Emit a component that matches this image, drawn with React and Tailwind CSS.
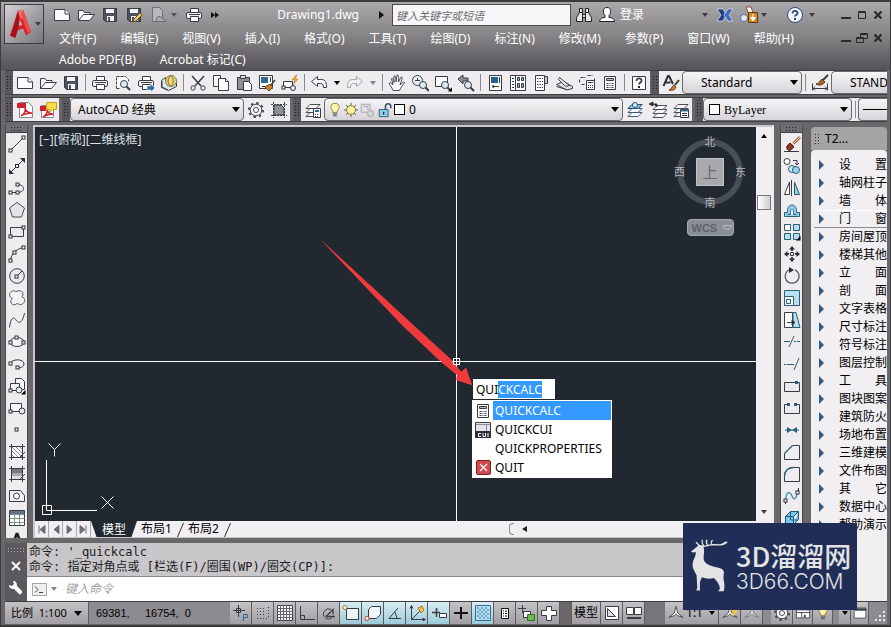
import React, { useEffect, useRef, useState } from "react";

const Node = ({ x, y }) => (
  <rect x={x - 1.5} y={y - 1.5} width="3" height="3" fill="#fff" stroke="#2c2c30" />
);

const Lens = ({ x = 11, y = 11 }) => (
  <g>
    <path d={`M${x + 2} ${y + 2}l4 4`} strokeWidth="2" />
    <circle cx={x} cy={y} r="3.5" fill="#dcecf4" />
  </g>
);

const floppy = (
  <g>
    <path d="M2.5 2.5h13v13h-11l-2-2z" fill="#4c515c" />
    <path d="M5 3h8v4H5z" fill="#f4f4f8" stroke="none" />
    <path d="M6 10h7v5H6z" fill="#f4f4f8" stroke="none" />
    <path d="M7 11h2v4H7z" fill="#4c515c" stroke="none" />
  </g>
);

const printer = (
  <g>
    <path d="M5.5 6.5v-4h8v4" fill="#fff" />
    <rect x="1.5" y="6.5" width="15" height="6" rx="1.5" fill="#f4f4f6" />
    <path d="M5.5 10.5h8v5h-8z" fill="#fff" />
    <path d="M4 8.5h11" />
  </g>
);

const layers = (
  <g fill="#f8f8fa" strokeWidth=".9">
    <path d="M2 15.5l4-4h10l-4 4z" />
    <path d="M2 11.5l4-4h10l-4 4z" />
    <path d="M2 7.5l4-4h10l-4 4z" />
  </g>
);

const icons = {
  newFile: (
    <g fill="#fbfbfd">
      <path d="M1.5 3.5H12l4.5 4.5v6.5h-15z" />
      <path d="M12 3.5V8h4.5" />
    </g>
  ),
  open: (
    <g fill="#fbfbfd">
      <path d="M1.5 14.5v-10H6l1.5 2H13v3" />
      <path d="M1.5 14.5l5-6h11l-5 6z" />
    </g>
  ),
  save: floppy,
  saveAs: (
    <g>
      {floppy}
      <path d="M8 16l1-3 6-6 2 2-6 6z" fill="#f2c76b" stroke="#6b4d1f" />
    </g>
  ),
  webOpen: (
    <g stroke="#6f6d74">
      <path d="M3.5 1.5h7l3 3v11h-10z" fill="#b9b7bb" />
      <path d="M8 15.5a3 3 0 0 1 3-5l6 5z" fill="#aaa8ad" />
    </g>
  ),
  print: printer,
  preview: (
    <g>
      <path d="M2.5 14.5v-12h9l3 3v2M2.5 14.5h3" fill="#fff" strokeDasharray="3 1" />
      <Lens x={10} y={10} />
    </g>
  ),
  publish: (
    <g>
      {printer}
      <path d="M10 12h4v-2l4 4-4 4v-2h-4z" fill="#2a6fa8" stroke="#fff" strokeWidth=".5" />
    </g>
  ),
  globe: (
    <g>
      <path d="M1.5 6.5l4-3 2 8 9-3v4l-8 4-7-3z" fill="#d6ebf3" />
      <circle cx="11" cy="7" r="5.5" fill="#e9d77a" stroke="#8a7a34" />
      <path d="M11 1.5c-4 3-4 8 0 11" stroke="#a9444e" />
      <path d="M11 1.5c3 3 3 8 0 11" stroke="#5d8a4a" />
      <path d="M2 7v6l6 3" />
    </g>
  ),
  cut: (
    <g>
      <path d="M3 2l9 10M15 2L6 12" strokeWidth="1.5" />
      <circle cx="4" cy="14" r="2.2" fill="#f2f2f4" />
      <circle cx="14" cy="14" r="2.2" fill="#f2f2f4" />
    </g>
  ),
  copy: (
    <g fill="#fff">
      <path d="M1.5 1.5h7v11h-7z" />
      <path d="M6.5 4.5h7l3 3v9h-10z" />
      <path d="M13.5 4.5v3h3" />
    </g>
  ),
  paste: (
    <g>
      <path d="M2.5 3.5h12v12h-12z" fill="#8e9097" />
      <path d="M5.5 1.5h5v3h-5z" fill="#dcdce0" />
      <path d="M8.5 7.5h5l3 3v6h-8z" fill="#fff" />
    </g>
  ),
  matchProps: (
    <g>
      <path d="M1.5 1.5h13v13h-13z" fill="#fff" />
      <path d="M3 3h7v6H3z" fill="#2d6b96" stroke="none" />
      <path d="M12.5 3v5M4 12.5h4" />
      <path d="M17 6l-4 5" stroke="#444" strokeWidth="1.5" />
      <path d="M7 13l5-3 3 3-4 4z" fill="#c87f2e" stroke="#6b4216" />
    </g>
  ),
  blockEdit: (
    <g>
      <path d="M2.5 7.5h9v6h-9z" fill="#f7f7f9" />
      <Node x={2.5} y={13.5} />
      <circle cx="12" cy="14" r="2.5" fill="#dcecf4" />
      <path d="M15 1l-4 5h3l-2 5 5-6h-3l2-4z" fill="#f4a52e" stroke="#b8721a" strokeWidth=".5" />
    </g>
  ),
  undo: <path d="M1.5 7.5l6-5v3h4c4 0 5 3 5 8h-3c0-3-1-4-3-4h-3v3z" fill="#fafafc" />,
  redo: (
    <path d="M16.5 7.5l-6-5v3h-4c-4 0-5 3-5 8h3c0-3 1-4 3-4h3v3z" fill="#f1f1f4" stroke="#a6a5aa" />
  ),
  pan: (
    <path
      d="M5 16.5C4 13 1 11 1.500 9c1-1 2 .5 3.500 2L3.500 4.500c1-1 1.800 0 2.500 4L6 2c1-1 2 0 2 6l1-7c1-.5 2 0 1.500 7L13 3c1-.5 1.500.5 1 2l-2 6c2-2 4-3.500 4.500-2.500-1 2-4 5-5 8z"
      fill="#fafafc"
      strokeWidth=".9"
    />
  ),
  zoom: (
    <g>
      <circle cx="6.5" cy="6.5" r="5" fill="#e6f1f6" />
      <path d="M4 6.5h5M6.5 4v3" />
      <Lens x={12} y={11} />
    </g>
  ),
  zoomWindow: (
    <g>
      <path d="M1.5 2.5h12v10h-12z" fill="#fafafc" />
      <Lens x={11} y={11} />
      <path d="M14 17.5h4v-4z" fill="#000" stroke="none" />
    </g>
  ),
  zoomPrev: (
    <g>
      <path d="M1 5l5-4v3h5v3H6v3z" fill="#8a8c93" />
      <Lens x={11} y={11} />
    </g>
  ),
  properties: (
    <g>
      <path d="M3.5 1.5h12v15h-12z" fill="#fff" />
      <path d="M5 3h7v6H5z" fill="#2d5f8c" stroke="none" />
      <path d="M13.5 3v6M7 12.5h6M8 11l-2 1.5L8 14" />
    </g>
  ),
  designCenter: (
    <g>
      <path d="M1.5 1.5h15v15h-15z" fill="#fff" />
      <path d="M6.5 1.5v15M3 4.5h2M3 7.5h2M3 10.5h2M3 13.5h2" />
      <path d="M8.5 3.5h2v3h-2zM12.5 3.5h2v3h-2zM8.5 9.5h2v4h-2zM12.5 9.5h2v4h-2z" fill="#8fa9bd" />
    </g>
  ),
  palettes: (
    <g>
      <path d="M3.5 1.5h9v15h-9z" fill="#fff" />
      <path d="M12.5 2.5h3v7h-3z" fill="#c9cad0" />
      <path d="M5 4.5h6M5 7.5h6M5 10.5h6M5 13.5h6" strokeDasharray="1.5 1" />
    </g>
  ),
  sheetSet: (
    <g fill="#e6e6ea">
      <path d="M1.5 10.5l7-3 9 5v2l-6 1.5z" />
      <path d="M4.500 3.500l10 8-4 1-7-7zM1.500 12.500l10 3" />
    </g>
  ),
  markup: (
    <g>
      <path d="M2.5 3.5h5m2-2h5m2 3v3M1.5 5.5v3m2 2h4" strokeDasharray="3 1" />
      <path d="M8.5 6.5h8v9h-8z" fill="#fff" />
      <path d="M10 8.5h5M10 11.5h1m1 0h1m1 0h1M10 13.5h1m1 0h1m1 0h1" />
    </g>
  ),
  calc: (
    <g>
      <path d="M3.5 2.5h11v13h-11z" fill="#fff" />
      <path d="M5.5 4.5h7v2h-7z" fill="#b9bbc2" />
      <path d="M5.5 9.5h2m1 0h1m1 0h2M5.5 11.5h2m1 0h1m1 0h2M5.5 13.5h2m1 0h1m1 0h2" />
    </g>
  ),
  help: (
    <g>
      <path d="M2.5 2.5h13v13h-13z" fill="#fff" />
      <path d="M6.5 7c0-4 5.500-3 5 0-.3 1.500-2.500 1.500-2.500 3.500" strokeWidth="1.8" />
      <path d="M8 12h2v2H8z" fill="#222" stroke="none" />
    </g>
  ),
  textStyle: (
    <g>
      <path d="M1.500 12L6 2h1l4 8M3.500 8.500h5" strokeWidth="2" stroke="#33343a" />
      <path d="M17 6l-4 5" strokeWidth="2" stroke="#44342a" />
      <path d="M7 16c2 0 3-4 5-5l2 2c-1 3-4 4-7 3z" fill="#c87f2e" stroke="#6b4216" />
    </g>
  ),
  dimStyle: (
    <g>
      <path d="M1.5 9.5v7M16.5 9.5v7M2 14.5h14M4 12.5l-2 2 2 2M14 12.5l2 2-2 2" />
      <path d="M17 1l-5 5" strokeWidth="2" />
      <path d="M5 10c3 0 4-4 6-5l3 3c-2 3-6 4-9 2z" fill="#a8692e" stroke="#5b3a18" />
    </g>
  ),
  pdf: (
    <g>
      <path d="M3.5 1.5h9l4 4v11h-13z" fill="#fff" stroke="#88858c" />
      <path d="M1 2h9v5H1z" fill="#d3212c" stroke="none" />
      <path d="M5 15c3-2 5-5 4-8 1 4 4 5 7 5-4 0-8 1-11 3z" stroke="#d3212c" strokeWidth="1.5" />
    </g>
  ),
  pdfComment: (
    <g>
      <path d="M2.5 4.5h12v12h-12z" fill="#fff" stroke="#88858c" />
      <path d="M1 5h6v5H1z" fill="#d3212c" stroke="none" />
      <path d="M4 16c3-2 5-4 4-7 1 3 4 4 6 4-4 0-7 1-10 3z" stroke="#d3212c" strokeWidth="1.5" />
      <path d="M7.5 1.500h10v7h-4l-3 3v-3h-3z" fill="#f8dc4a" stroke="#c5a31f" />
    </g>
  ),
  gear: (
    <g stroke="#4c4e55">
      <circle cx="9" cy="9" r="7" strokeWidth="2" strokeDasharray="2.500 3" />
      <circle cx="9" cy="9" r="5.800" fill="#f2f2f4" />
      <circle cx="9" cy="9" r="2.500" fill="#fff" />
    </g>
  ),
  workspace: (
    <g>
      <path d="M4 4h7l3 3v7H4z" fill="#8d9097" />
      <path d="M1 3.5h16M1 14.5h16M3.5 1v16M14.5 1v16" strokeDasharray="2 1" />
    </g>
  ),
  layerProps: (
    <g>
      {layers}
      <path d="M9.5 7.5h7v9h-7z" fill="#fff" />
      <path d="M11 9h4v2h-4z" fill="#2d6b96" stroke="none" />
      <path d="M11 13.5h1m1 0h1M11 15.5h1m1 0h1" />
    </g>
  ),
  bulb: (
    <g>
      <path d="M9 1.5c-6 0-5.500 6-2.500 8.500v2h5v-2c3-2.500 3.500-8.500-2.500-8.500z" fill="#fdf3a8" stroke="#8b7b3c" />
      <path d="M6.5 13.5h5M7 15.5h4" />
    </g>
  ),
  sun: (
    <g>
      <path d="M9 1v16M1 9h16M3.5 3.5l11 11M14.5 3.5l-11 11" stroke="#57512f" />
      <circle cx="9" cy="9" r="5" fill="#fdf0a0" stroke="#7d7131" />
    </g>
  ),
  freeze: (
    <g stroke="#a5a4a9">
      <path d="M2.5 2.5h10v9h-10z" fill="#e0dfe2" />
      <path d="M5 5h5v4" />
      <circle cx="13" cy="13" r="3.5" fill="#d4d3d7" />
    </g>
  ),
  unlock: (
    <g>
      <path d="M9.5 8.5V5c0-4 6-4 6 0v2" strokeWidth="1.8" stroke="#33556e" />
      <path d="M2.5 8.5h10v8h-10z" fill="#8fd0ec" stroke="#25566f" />
      <path d="M7.5 11v3" stroke="#123" strokeWidth="1.5" />
    </g>
  ),
  layerCurrent: (
    <g stroke="#27506e">
      {layers}
      <path d="M6 3.5h10l-4 4H2z" fill="#8fd0ec" />
      <circle cx="9" cy="4" r="2.5" fill="#d9eef7" />
    </g>
  ),
  layerPrev: (
    <g>
      <g transform="translate(2 1)">{layers}</g>
      <path d="M0 3l4-2v4zM4 3h4v3" fill="#222" />
    </g>
  ),
  layerState: (
    <g>
      {layers}
      <path d="M8.5 8.5h8v8h-8z" fill="#fff" />
      <path d="M9 9.5h7" stroke="#2d6b96" strokeWidth="2" />
      <path d="M10 12.5h5M10 14.5h5" />
    </g>
  ),
  line: (
    <g>
      <path d="M2.5 15.5l13-13" />
      <Node x={2.5} y={15.5} />
      <Node x={15.5} y={2.5} />
    </g>
  ),
  xline: (
    <g>
      <path d="M2 16L16 2" />
      <path d="M1 17v-5l5 5zM17 1v5l-5-5z" fill="#2c2c30" stroke="none" />
      <Node x={9} y={9} />
    </g>
  ),
  pline: (
    <g>
      <path d="M2.5 13.5h7c8 0 8-8 0-8" />
      <Node x={2.5} y={13.5} />
      <Node x={9.5} y={13.5} />
      <Node x={9.5} y={5.5} />
    </g>
  ),
  polygon: <path d="M9 1.500l7.500 5.500-3 9h-9l-3-9z" fill="#e3e3e8" stroke="#4a4a50" />,
  rect: (
    <g>
      <path d="M2.5 4.5h13v9h-13z" fill="#e9e9ee" />
      <Node x={2.5} y={13.5} />
      <Node x={15.5} y={4.5} />
    </g>
  ),
  arc: (
    <g>
      <path d="M2.500 15.500C3 9 8 4 15.500 2.500" />
      <Node x={2.5} y={15.5} />
      <Node x={6.5} y={7.5} />
      <Node x={15.5} y={2.5} />
    </g>
  ),
  circle: (
    <g>
      <circle cx="9" cy="9" r="7.3" fill="#e9e9ee" />
      <path d="M9 9l5-5" />
      <Node x={8.5} y={9.5} />
    </g>
  ),
  cloud: (
    <path
      d="M8 3c2-2.500 7.500-1 7 2 0 2-1 2-1 3 3 1 3.500 4 1.500 6-2 2.500-4.500 2-6 0-2 2.500-5 2-6 .5-1.500-2-.5-4 1-5C1 8 1 5 2.500 3.500 4.500 1 7 1.500 8 3z"
      fill="#f3f3f6"
      stroke="#55555b"
    />
  ),
  spline: <path d="M1.500 16.500C3 5 6 6 8 9s6 5 8.500-7" stroke="#3f3f45" />,
  ellipse: (
    <g>
      <ellipse cx="9" cy="9" rx="7" ry="4.5" fill="#f3f3f6" />
      <Node x={8.5} y={4.5} />
      <Node x={2.5} y={9.5} />
      <Node x={15.5} y={9.5} />
    </g>
  ),
  ellipseArc: (
    <g>
      <path d="M2.500 8.500C3 4 16 3 16 9c0 3-4 4-6 4" />
      <Node x={2.5} y={8.5} />
      <Node x={9.5} y={12.5} />
    </g>
  ),
  insertBlock: (
    <g fill="#f7f7f9">
      <path d="M7.5 1.5h6l3 3v8h-9z" />
      <path d="M2.5 6.5h9v7h-9z" />
      <circle cx="11" cy="13" r="3" fill="#dfe9ee" />
      <Node x={2.5} y={13.5} />
      <path d="M13 17.5h4.500V13z" fill="#000" stroke="none" />
    </g>
  ),
  makeBlock: (
    <g fill="#f7f7f9">
      <path d="M2.5 4.5h11v8h-11z" />
      <circle cx="14" cy="12" r="3" fill="#dfe9ee" />
      <Node x={2.5} y={12.5} />
    </g>
  ),
  point: <Node x={8.5} y={8.5} />,
  hatch: (
    <g>
      <path d="M4 4h10v10H4z" fill="#fff" stroke="none" />
      <path d="M4 8l6 6M4 4l10 10M8 4l6 6M4 12l2 2M12 4l2 2" stroke="#8c8c92" />
      <path d="M1 3.5h16M1 14.5h16M3.5 1v16M14.5 1v16" />
      <path d="M12 14l5-5" />
    </g>
  ),
  gradient: (
    <g>
      <path d="M4 4h10v4H4z" fill="#77777d" stroke="none" />
      <path d="M4 8h10v3H4z" fill="#a9a9b0" stroke="none" />
      <path d="M4 11h10v3H4z" fill="#dcdce0" stroke="none" />
      <path d="M1 3.5h16M1 14.5h16M3.5 1v16M14.5 1v16" />
      <path d="M12 14l5-5" />
    </g>
  ),
  region: (
    <g>
      <path d="M1.5 3.5h11l4 5v6h-15z" fill="#f3f3f6" />
      <circle cx="8.5" cy="9" r="3" fill="#fff" />
    </g>
  ),
  table: (
    <g>
      <path d="M1.5 1.5h15v15h-15z" fill="#fff" />
      <path d="M2 2h14v3H2z" fill="#5f7487" stroke="none" />
      <path d="M1.5 5.5h15M1.5 9.5h15M1.5 13.5h15M6.5 5v11M11.5 5v11" stroke="#7a948a" />
    </g>
  ),
  mtext: <path d="M4 16L8.500 3h1L14 16M6 11.500h6" strokeWidth="2.5" stroke="#222" />,
  erase: (
    <g>
      <path d="M1 16.5h15" />
      <path d="M17 2l-8 8" strokeWidth="3" stroke="#a8703f" />
      <path d="M17 2l-6 6" strokeWidth="1" stroke="#f0c48c" />
      <path d="M4 11l3-3 4 4-4 3.500c-2 .5-4-2-3-4.500z" fill="#8a3626" stroke="#4d1c14" />
      <path d="M8 7l4 4" stroke="#eee" strokeWidth="1.5" />
    </g>
  ),
  copyObj: (
    <g>
      <circle cx="4" cy="4.500" r="3" fill="#fff" />
      <path d="M10 3.500h4v4M12 6l2 2 2-2" />
      <circle cx="9" cy="12" r="3.5" fill="#cde8f3" stroke="#2c5e78" />
      <circle cx="13" cy="13" r="3.5" fill="#9bd6ee" stroke="#2c5e78" />
    </g>
  ),
  mirror: (
    <g>
      <path d="M6.5 3v12.5h-5z" fill="#fff" />
      <path d="M11.5 3v12.5h5z" fill="#8fd0ec" stroke="#2c5e78" />
      <path d="M8.5 1v16" />
    </g>
  ),
  offset: (
    <g stroke="#2c5e78">
      <path d="M1.500 15.500v-4h3c-1-10 10-10 9 0h3v4z" fill="#8fd0ec" />
      <path d="M4.500 13.500h3c-1-7 4-7 3 0h3" fill="#fff" />
    </g>
  ),
  array: (
    <g>
      <path d="M1.5 1.5h6v6h-6z" fill="#fff" stroke="#2c5e78" />
      <path d="M10.5 1.5h6v6h-6zM1.5 10.5h6v6h-6zM10.5 10.5h6v6h-6z" fill="#b5e0f2" stroke="#2c5e78" />
      <path d="M13 17.500h4.500V13z" fill="#000" stroke="none" />
    </g>
  ),
  move: (
    <g>
      <path d="M7.5 7.5h3v3h-3z" />
      <path d="M9 1l3 3.500H6zM9 17l3-3.500H6zM1 9l3.500-3v6zM17 9l-3.500-3v6z" fill="#2c2c30" stroke="none" />
      <path d="M9 4v2M9 12v2M4 9h2M12 9h2" strokeWidth="2" />
    </g>
  ),
  rotate: (
    <g>
      <path d="M7 2.500a7 7 0 1 0 5 .3" strokeWidth="1.3" stroke="#55555b" />
      <path d="M6 0l5 3-5 3z" fill="#2c2c30" stroke="none" />
    </g>
  ),
  scale: (
    <g stroke="#2c5e78">
      <path d="M1.5 1.5h15v15h-15z" fill="#b5e0f2" />
      <path d="M1.5 7.5h9v9h-9z" fill="#fff" />
      <path d="M3.5 10.5h4v4h-4z" fill="#e8f4f9" />
    </g>
  ),
  stretch: (
    <g>
      <path d="M1.5 1.5h8v15h-8z" fill="#fff" />
      <path d="M10 1.500h3l4 15h-7z" fill="#b5e0f2" stroke="#2c5e78" />
      <path d="M4 11.500h7M9 9l3 2.500L9 14z" fill="#111" />
    </g>
  ),
  trim: <path d="M1 8.500h6M11 8.500h2m1 0h3M6 14l5-11" stroke="#2c5e78" />,
  extend: <path d="M1 9.500h2m1 0h7M11 15l5-12" stroke="#2c5e78" />,
  breakAt: (
    <g>
      <path d="M1.5 14.5v-9h15v9z" fill="#eaeaef" />
      <path d="M12 4h3v3h-3z" fill="#2c5e78" stroke="none" />
    </g>
  ),
  breakObj: (
    <g>
      <path d="M5.5 5.5h-4v9h15v-9h-4" fill="#eaeaef" />
      <path d="M4 4h3v3H4zM11 4h3v3h-3z" fill="#2c5e78" stroke="none" />
    </g>
  ),
  join: (
    <g fill="#2c5e78" stroke="none">
      <path d="M2 8.500h14v1H2z" />
      <path d="M4 6l5 3-5 3zM14 6L9 9l5 3z" />
    </g>
  ),
  chamfer: (
    <g>
      <path d="M1.5 16.5v-6l8-8h7v14z" fill="#eeeef2" />
      <path d="M1.500 10.500l8-8" stroke="#2c5e78" strokeWidth="1.3" />
    </g>
  ),
  fillet: (
    <g>
      <path d="M1.500 16.500v-5c0-6 4-9 9-9h6v14z" fill="#eeeef2" />
      <path d="M1.500 11.500c0-6 4-9 9-9" stroke="#2c5e78" strokeWidth="1.3" />
    </g>
  ),
  blend: (
    <g>
      <path d="M2.500 14C3 4 7 4 9 9s4 4 6-6" stroke="#3f8db4" strokeWidth="1.3" />
      <path d="M2.5 12v5M15.500 1v5" />
      <Node x={2.5} y={13.5} />
      <Node x={14.5} y={5.5} />
    </g>
  ),
  explode: (
    <g stroke="#1e5c7c" fill="#7cc8e8">
      <path d="M2.5 7.5h8v8h-8zM2.5 7.5l5-5h8l-5 5M15.5 2.5v8l-5 5" />
      <path d="M7.5 3v8M8 11h7" fill="none" />
    </g>
  ),
  snap: (
    <g>
      <path d="M1 6.5h12M6.5 1v12" />
      <path d="M4.5 4.5h4v4h-4z" />
      <path d="M11.5 17v-6.500h4v3h-4" stroke="#2d6b96" />
    </g>
  ),
  dots: <path d="M3 4.500h9M3 7.500h9M3 10.500h9M3 14.500h10M14.500 3v11" strokeDasharray="1 2" />,
  grid: (
    <g>
      <path d="M1.5 1.5h15v15h-15z" fill="#fff" />
      <path
        d="M4.5 1v16M7.5 1v16M10.5 1v16M13.5 1v16M1 4.5h16M1 7.5h16M1 10.5h16M1 13.5h16"
        stroke="#63656c"
      />
    </g>
  ),
  ortho: <path d="M2.5 2v13.5H17M2.5 11.5h4v4" />,
  polar: (
    <g>
      <path d="M12 13.500a5 5 0 1 1-1-8" />
      <path d="M6 12.500h9M6 12.500l7-7v5" strokeWidth="1.3" />
    </g>
  ),
  osnap: (
    <g>
      <path d="M4.5 4.5h12v11h-12z" fill="#eef3f6" />
      <circle cx="3" cy="3.5" r="2" fill="#fff" stroke="#b5702b" />
    </g>
  ),
  osnap3d: (
    <g>
      <path d="M4.5 5.500l3-3h9v8l-4 4h-8z" fill="#f4f8fa" />
      <circle cx="3" cy="14.5" r="2" fill="#fff" stroke="#c4392b" />
    </g>
  ),
  otrack: <path d="M3 14.500h12M3 14.500L12 4M9 8l2 6" />,
  ducs: (
    <g>
      <path d="M3.500 2v13.500H17M3.500 15.500L12 7M2 4.500l1.500-3 1.500 3M14.500 14l3 1.500-3 1.500" />
      <path d="M10 4l4-2 2 4-3 3z" fill="#f4c04a" stroke="#a87a1f" />
    </g>
  ),
  dyn: (
    <g>
      <path d="M2 8.5h8M6.5 4v9" strokeWidth="1.5" />
      <path d="M9.5 9.5h7v4h-7z" fill="#fff" />
    </g>
  ),
  lwt: <path d="M2 9h14M9 3v12" stroke="#111" strokeWidth="2" />,
  transp: (
    <g>
      <path d="M1.5 1.5h15v15h-15z" fill="#b9dfef" stroke="#2d6b96" />
      <path d="M3 4h12M3 8h12M3 12h12" stroke="#6dabcb" strokeDasharray="2 2" strokeWidth="2" />
      <path d="M5 6h11M5 10h11M5 14h11" stroke="#6dabcb" strokeDasharray="2 2" strokeWidth="2" />
    </g>
  ),
  quickProps: (
    <g stroke="#111">
      <path d="M5.5 4.5h7v10h-7z" fill="#fff" />
      <path d="M7 7h1m1 0h2M7 9.500h1m1 0h2M7 12h1m1 0h2" />
    </g>
  ),
  cycling: (
    <g>
      <path d="M0 4.5h8M4.5 1v8" />
      <path d="M5.5 7.5h7v6h-7z" fill="#fff" />
      <path d="M9.5 10.5h7v6h-7z" fill="#6fb84e" stroke="#2e6e1d" />
    </g>
  ),
  monitor: <path d="M6.5 2.5h5v4h5v5h-5v5h-5v-5h-5v-5h5z" fill="#fff" />,
  layoutQv: (
    <g>
      <path d="M2.5 2.5h13v13h-13z" fill="#fff" />
      <path d="M4.5 4.500v8h8z" fill="#d8dadf" />
    </g>
  ),
  drawingQv: <path d="M1.5 3.5h7v7h-7zM9.5 3.5h7v7h-7zM2 14.5h14M2 13.500h14" fill="#fff" />,
  anno: <path d="M9 1.500l2 7.500 6 5-6-2-2-2-2 2-6 2 6-5z" fill="#fff" />,
  annoOn: (
    <g>
      <path d="M9 1.500l2 7.500 6 5-6-2-2-2-2 2-6 2 6-5z" fill="#fff" />
      <path d="M10 4l4 2 3-3v5l-4 5z" fill="#f4c04a" stroke="none" />
    </g>
  ),
  toolbarLock: (
    <g>
      <path d="M1.5 5.5h15v9h-15zM1.5 8.5h15M7.5 8v6" fill="#fff" />
      <path d="M11 11v3" strokeWidth="2" />
    </g>
  ),
  cleanScreen: (
    <g>
      <path d="M1.5 2.5h15v13h-15z" fill="#fff" />
      <path d="M2 4.5h15" strokeWidth="3" />
    </g>
  ),
  binoculars: (
    <g fill="#e6e6ea" stroke="#222">
      <path d="M4.5 2.5h3v5h-3zM10.5 2.5h3v5h-3z" />
      <path d="M1.5 15.5v-4l3-5h3v9zM10.5 15.5v-9h3l3 5v4z" />
      <path d="M7.5 8.5h3v3h-3z" />
    </g>
  ),
  user: (
    <path
      d="M9 1.500c-5 0-4 6-2 8v2c-3 0-5 1-5.500 4h15c-.5-3-2.500-4-5.500-4v-2c2-2 3-8-2-8z"
      fill="#fff"
      stroke="#222"
    />
  ),
  exchange: (
    <g strokeWidth=".7" stroke="#dfe6f5">
      <path d="M1 3h6l3 6-3 6H1l4-6z" fill="#24407c" />
      <path d="M17 3h-5L8 9l4 6h5l-4-6z" fill="#3b68b8" />
    </g>
  ),
  apps: (
    <g>
      <path d="M6 1h5l5 14h-4z" fill="#fff" stroke="#8d4b3d" />
      <circle cx="4" cy="12" r="3.5" fill="#e2eaf6" stroke="#5a6c9c" />
      <path d="M8.5 6.5h9v10h-9z" fill="#d98a1f" stroke="#5e3a08" />
      <path d="M13 8v4M10.500 11.500h5L13 15z" fill="#fff" stroke="#fff" />
    </g>
  ),
  helpRound: (
    <g>
      <circle cx="9" cy="9" r="7.5" fill="#f3f7fd" stroke="#27467c" />
      <path d="M6.500 7.500c0-4 5.500-3 5 0-.3 1.500-2.500 1.500-2.500 3" stroke="#27467c" strokeWidth="1.8" />
      <path d="M8 12h2v2H8z" fill="#27467c" stroke="none" />
    </g>
  ),
};

const Icon = ({ name, className = "size-[18px]" }) => (
  <svg viewBox="0 0 18 18" className={`${className} shrink-0`} fill="none" stroke="#3a3c43" aria-hidden="true">
    {icons[name]}
  </svg>
);

const Caret = ({ className = "text-black" }) => (
  <svg width="8" height="5" viewBox="0 0 8 5" className={`shrink-0 ${className}`} aria-hidden="true">
    <path d="M0 0h8L4 5z" fill="currentColor" />
  </svg>
);

const SmallCaret = ({ className = "text-[#3d3d42]" }) => (
  <svg width="6" height="4" viewBox="0 0 6 4" className={`shrink-0 ${className}`} aria-hidden="true">
    <path d="M0 0h6L3 4z" fill="currentColor" />
  </svg>
);

const Grip = () => (
  <div className="w-2 shrink-0 py-1 px-px bg-[#59575b]">
    <div className="h-full bg-[radial-gradient(#1c1c1e_1px,transparent_1px)] bg-size-[3px_3px]" />
  </div>
);

const GripTop = () => (
  <div className="h-2 shrink-0 py-px px-1 bg-[#6f6d71] border-b border-[#3e3d40]">
    <div className="h-full bg-[radial-gradient(#1c1c1e_1px,transparent_1px)] bg-size-[3px_3px]" />
  </div>
);

const Separator = () => (
  <div className="w-[6px] shrink-0 flex justify-center">
    <div className="w-px my-[3px] bg-[#8b898d]" />
  </div>
);

const Panel = ({ className = "", children }) => (
  <div className={`flex items-stretch bg-[#eeecef] ${className}`}>{children}</div>
);

const ToolButton = ({ name }) => (
  <button aria-label={name} className="w-[23px] shrink-0 flex items-center justify-center">
    <Icon name={name} />
  </button>
);

const Combo = ({ label, value, className = "", selectClass = "", children }) => (
  <label
    className={`relative flex items-center rounded-sm border border-[#6b696d] bg-linear-to-b from-[#f6f5f7] to-[#d6d4d8] ${className}`}
  >
    {children}
    <select
      aria-label={label}
      className={`appearance-none bg-transparent flex-1 min-w-0 h-full outline-none text-black ${selectClass}`}
    >
      <option>{value}</option>
    </select>
    <Caret className="absolute right-[3px] text-black" />
  </label>
);

const toolbar = [
  "newFile", "open", "save", "|",
  "print", "preview", "publish", "globe", "|",
  "cut", "copy", "paste", "matchProps", "blockEdit", "|",
  "undo", "v", "redo", "w", "|",
  "pan", "zoom", "zoomWindow", "zoomPrev", "|",
  "properties", "designCenter", "palettes", "sheetSet", "markup", "calc", "|",
  "help",
];

const drawTools = [
  "line", "xline", "pline", "polygon", "rect", "arc", "circle", "cloud", "spline", "ellipse",
  "ellipseArc", "insertBlock", "makeBlock", "point", "hatch", "gradient", "region", "table", "mtext",
];

const modifyTools = [
  "erase", "copyObj", "mirror", "offset", "array", "move", "rotate", "scale", "stretch", "trim",
  "extend", "breakAt", "breakObj", "join", "chamfer", "fillet", "blend", "explode",
];

const menus = [
  "文件(F)", "编辑(E)", "视图(V)", "插入(I)", "格式(O)", "工具(T)", "绘图(D)", "标注(N)", "修改(M)",
  "参数(P)", "窗口(W)", "帮助(H)", "Adobe PDF(B)", "Acrobat 标记(C)",
];

const screenMenu = [
  "设　　置", "轴网柱子", "墙　　体", "门　　窗", "房间屋顶", "楼梯其他", "立　　面", "剖　　面",
  "文字表格", "尺寸标注", "符号标注", "图层控制", "工　　具", "图块图案", "建筑防火", "场地布置",
  "三维建模", "文件布图", "其　　它", "数据中心", "帮助演示",
];

const statusToggles = [
  { name: "snap", on: false },
  { name: "dots", on: false },
  { name: "grid", on: false },
  { name: "ortho", on: false },
  { name: "polar", on: false },
  { name: "osnap", on: true },
  { name: "osnap3d", on: true },
  { name: "otrack", on: true },
  { name: "ducs", on: true },
  { name: "dyn", on: true },
  { name: "lwt", on: false },
  { name: "transp", on: true },
  { name: "quickProps", on: false },
  { name: "cycling", on: false },
  { name: "monitor", on: false },
];

const WindowButtons = ({ restore }) => (
  <div className="flex text-[#2a2a2d]">
    <button aria-label="最小化" className="w-4 h-4 flex items-center justify-center">
      <svg width="10" height="12" viewBox="0 0 10 12">
        <path d="M0 9h10" stroke="currentColor" strokeWidth="2" />
      </svg>
    </button>
    <button aria-label="还原" className="w-4 h-4 flex items-center justify-center">
      <svg width="12" height="12" viewBox="0 0 12 12" fill="none" stroke="currentColor">
        {restore ? (
          <path d="M4.5 1.5h7v5h-7zM4.5 2.5h7M.5 5.5h7v5h-7zM.5 6.5h7" />
        ) : (
          <path d="M2.5 2.5h7v7h-7zM2.5 3.5h7" />
        )}
      </svg>
    </button>
    <button aria-label="关闭" className="w-4 h-4 flex items-center justify-center">
      <svg width="10" height="10" viewBox="0 0 10 10">
        <path d="M1.5 1.5l7 7M8.5 1.5l-7 7" stroke="currentColor" strokeWidth="2.2" />
      </svg>
    </button>
  </div>
);

const Header = () => (
  <header className="flex bg-linear-to-b from-[#aaa8ab] via-[#858386] to-[#545256] border-t-2 border-[#3b3a3d] text-white">
    <button
      aria-label="应用程序菜单"
      className="m-[3px] mt-[2px] size-10 shrink-0 flex items-center gap-[2px] border border-[#3b3a3d] bg-linear-to-br from-[#d4d2d5] to-[#77757a] pl-1"
    >
      <svg width="24" height="30" viewBox="0 0 25 34" className="shrink-0">
        <path d="M9 2l6-1 9 25-6 4-3-8-6 2-3 9-6-3z" fill="#d8232b" />
        <path d="M9 2L3 24l-3 6 6 3 5-18z" fill="#a3121b" />
        <path d="M9 2l6-1 3 9-6 1z" fill="#f2767a" />
        <path d="M11 12l3 6-4 1z" fill="#bdbbbe" />
        <path d="M15 1l9 25-4 1-8-22z" fill="#ef4c50" />
      </svg>
      <SmallCaret />
    </button>
    <div className="flex-1 min-w-0">
      <div className="h-[26px] flex items-center">
        <div className="flex items-center gap-[6px] pl-[6px]">
          {["newFile", "open", "save", "saveAs", "webOpen"].map((name) => (
            <button key={name} aria-label={name}>
              <Icon name={name} />
            </button>
          ))}
        </div>
        <SmallCaret className="mx-1 text-[#55545a]" />
        <button aria-label="打印" className="ml-1">
          <Icon name="print" />
        </button>
        <svg width="8" height="6" viewBox="0 0 8 6" className="ml-2">
          <path d="M0 0l4 3-4 3zM4 0l4 3-4 3z" fill="#111" />
        </svg>
        <h1 className="ml-auto text-[12px] leading-4">Drawing1.dwg</h1>
        <svg width="5" height="8" viewBox="0 0 5 8" className="ml-5 mr-2">
          <path d="M0 0l5 4-5 4z" fill="#111" />
        </svg>
        <input
          aria-label="搜索"
          placeholder="键入关键字或短语"
          className="w-[179px] h-[22px] px-[3px] text-[11px] italic text-black placeholder:text-[#6e6c70] bg-[#f7f6f8] border border-[#4b4a4d] outline-none"
        />
        <button aria-label="查找" className="ml-1">
          <Icon name="binoculars" />
        </button>
        <button className="ml-[5px] flex items-center gap-1 text-[12px] leading-4">
          <Icon name="user" />
          登录
        </button>
        <SmallCaret className="ml-[58px] text-[#3d3d42]" />
        <button aria-label="Exchange" className="ml-2">
          <Icon name="exchange" />
        </button>
        <button aria-label="应用" className="ml-[6px] flex items-center gap-[3px]">
          <Icon name="apps" />
          <SmallCaret />
        </button>
        <button aria-label="帮助" className="ml-[19px] flex items-center gap-[5px]">
          <Icon name="helpRound" />
          <SmallCaret />
        </button>
        <div className="ml-[23px] mr-1">
          <WindowButtons />
        </div>
      </div>
      <nav className="flex items-start">
        <div className="flex-1 flex flex-wrap text-[12px] leading-[21px]">
          {menus.map((menu) => (
            <button key={menu} className="px-3">
              {menu}
            </button>
          ))}
        </div>
        <div className="mr-1 mt-[2px]">
          <WindowButtons restore />
        </div>
      </nav>
    </div>
  </header>
);

const StandardToolbar = () => (
  <div className="flex h-[25px] border-y border-[#403f42] overflow-hidden">
    <Grip />
    <Panel>
      {toolbar.map((name, i) => {
        if (name === "|") return <Separator key={i} />;
        if (name === "v" || name === "w")
          return (
            <button key={i} aria-label="历史" className="w-[13px] shrink-0 flex items-center justify-center">
              <SmallCaret className={name === "v" ? "text-black" : "text-[#85838a]"} />
            </button>
          );
        return <ToolButton key={i} name={name} />;
      })}
    </Panel>
    <div className="w-px shrink-0" />
    <Grip />
    <Panel className="flex-1 min-w-0">
      <ToolButton name="textStyle" />
      <Combo label="文字样式" value="Standard" className="w-[120px] shrink-0" selectClass="pl-[18px] text-[12px]" />
      <Separator />
      <ToolButton name="dimStyle" />
      <Combo label="标注样式" value="STANDARD" className="w-[120px] shrink-0" selectClass="pl-[18px] text-[12px]" />
    </Panel>
  </div>
);

const LayerToolbar = () => (
  <div className="flex h-[25px] mt-[2px] border-y border-[#403f42] overflow-hidden">
    <Grip />
    <Panel>
      <ToolButton name="pdf" />
      <ToolButton name="pdfComment" />
    </Panel>
    <div className="w-[3px] shrink-0" />
    <Grip />
    <Panel>
      <Combo label="工作空间" value="AutoCAD 经典" className="w-[174px]" selectClass="pl-[7px] text-[12px]" />
      <ToolButton name="gear" />
      <ToolButton name="workspace" />
    </Panel>
    <div className="w-[3px] shrink-0" />
    <Grip />
    <Panel className="flex-1 min-w-0">
      <ToolButton name="layerProps" />
      <Combo label="图层" value="0" className="flex-1 min-w-0 pl-[2px]" selectClass="pl-1 text-[12px]">
        <Icon name="bulb" className="size-4" />
        <Icon name="sun" className="size-4" />
        <Icon name="freeze" className="size-4" />
        <span className="w-[2px]" />
        <Icon name="unlock" className="size-4" />
        <span className="ml-px size-[11px] bg-white border border-black" />
      </Combo>
      <ToolButton name="layerCurrent" />
      <ToolButton name="layerPrev" />
      <ToolButton name="layerState" />
    </Panel>
    <div className="w-[3px] shrink-0" />
    <Grip />
    <Panel>
      <Combo
        label="颜色"
        value="ByLayer"
        className="w-[149px] shrink-0 pl-[5px]"
        selectClass="pl-1 text-[12px] font-['Liberation_Serif',serif]"
      >
        <span className="size-[11px] bg-white border border-black" />
      </Combo>
      <Separator />
      <button
        aria-label="线型"
        className="w-[29px] flex items-center pl-1 rounded-l-sm border border-r-0 border-[#6b696d] bg-linear-to-b from-[#f6f5f7] to-[#d6d4d8]"
      >
        <span className="w-full h-px bg-black" />
      </button>
    </Panel>
  </div>
);

const SideToolbar = ({ tools }) => (
  <div className="w-[23px] shrink-0 min-h-0 overflow-hidden flex flex-col bg-[#eeecef] border-x border-[#4a494c]">
    <GripTop />
    {tools.map((name) => (
      <button key={name} aria-label={name} className="h-[22px] shrink-0 flex items-center justify-center">
        <Icon name={name} />
      </button>
    ))}
  </div>
);

const ViewCube = () => (
  <div className="absolute right-[9px] top-2 w-[74px] flex flex-col items-center text-[11px] leading-3 text-[#b4b7bd]">
    <div className="relative size-[74px] flex items-center justify-center">
      <div className="absolute inset-1 rounded-full border-[6px] border-[#474d59]" />
      <span className="absolute top-px">北</span>
      <span className="absolute bottom-0">南</span>
      <span className="absolute left-px">西</span>
      <span className="absolute right-px">东</span>
      <button className="size-7 bg-[#a7a9ac] border border-[#c1c2c4] text-[15px] leading-6 text-[#66686c]">上</button>
    </div>
    <button className="mt-[10px] w-[47px] h-[17px] pl-1 flex items-center gap-[6px] rounded-sm bg-[#8a8e96] border border-[#a6a9af] font-['Liberation_Sans',sans-serif] font-bold text-[#5f636b]">
      WCS
      <span className="w-[9px] h-[5px] border border-[#b4b7bd] rounded-b-md" />
    </button>
  </div>
);

const CommandSuggest = () => {
  const inputRef = useRef(null);
  const [active, setActive] = useState("QUICKCALC");

  useEffect(() => {
    inputRef.current.focus();
    inputRef.current.setSelectionRange(3, 9);
  }, []);

  const items = [
    { name: "QUICKCALC", icon: <Icon name="calc" /> },
    {
      name: "QUICKCUI",
      icon: (
        <svg width="16" height="16" viewBox="0 0 16 16">
          <path d="M.5.5h15v15H.5z" fill="#e3e4e8" stroke="#3c3f4a" />
          <path d="M1 2.5h14M11.5 3v6" stroke="#8a8e9c" />
          <path d="M0 9h16v7H0z" fill="#2c2f3c" />
          <path d="M6 11.5H3.5v3H6M8 11v3.5h2.5V11M13 11v4" stroke="#fff" fill="none" />
        </svg>
      ),
    },
    { name: "QUICKPROPERTIES", icon: null },
    {
      name: "QUIT",
      icon: (
        <svg width="15" height="15" viewBox="0 0 15 15">
          <rect x=".5" y=".5" width="14" height="14" rx="1.5" fill="#cf4a4a" stroke="#7d1f24" />
          <path d="M4 4l7 7M11 4l-7 7" stroke="#fff" strokeWidth="1.3" />
        </svg>
      ),
    },
  ];

  return (
    <div className="absolute left-[437px] top-[252px] w-[140px] text-[12px] text-black">
      <input
        ref={inputRef}
        aria-label="动态输入"
        defaultValue="QUICKCALC"
        className="ml-px w-[82px] h-5 px-[3px] bg-white outline-none selection:bg-[#3399ff] selection:text-white"
      />
      <ul className="mt-px p-px bg-white">
        {items.map((item) => (
          <li key={item.name}>
            <button onClick={() => setActive(item.name)} className="w-full h-[19px] flex items-center text-left">
              <span className="w-5 shrink-0 flex justify-center">{item.icon}</span>
              <span
                className={
                  active === item.name
                    ? "flex-1 h-full pl-[2px] leading-[19px] bg-[#3399ff] text-white"
                    : "flex-1 h-full pl-[2px] leading-[19px]"
                }
              >
                {item.name}
              </span>
            </button>
          </li>
        ))}
      </ul>
    </div>
  );
};

const Viewport = () => (
  <div className="relative flex-1 min-w-0 bg-[#212830] overflow-hidden">
    <span className="absolute left-1 top-[5px] text-[12px] leading-4 text-[#dfe2e6]">[−][俯视][二维线框]</span>
    <svg className="absolute inset-0 size-full" fill="none">
      <path d="M286 113l90 83 42 38 8 11 5-4 6 17-16-5 1-5-16-13-38-36z" fill="#ee3a3c" />
      <path d="M421.5 0v1000M0 234.5h3000M418.5 231.5h6v6h-6z" stroke="#fff" />
      <path d="M286 113l90 83 40 37 10 12 5-4 6 17-16-5 1-5-14-12-40-37z" fill="#ee3a3c" />
      <path d="M418.5 231.5h6v6h-6zM421.5 231v7M418 234.5h7" stroke="#fff" />
    </svg>
    <svg width="90" height="90" viewBox="0 0 90 90" className="absolute left-0 bottom-0" fill="none" stroke="#fff">
      <path d="M7.5 74.5h9v9h-9zM11.5 29v50.5H62" />
      <path d="M13.5 12.5l6 6 6-6M19.5 18.5v7M66.5 65.5l12 12M78.5 65.5l-12 12" />
    </svg>
    <ViewCube />
    <CommandSuggest />
  </div>
);

const LayoutTabs = () => (
  <div className="h-[17px] flex items-stretch bg-[#f1eff2] border-b border-[#c9c7ca] text-[12px] leading-[18px] text-black">
    {["M4 3v8M10 3v8L5 7z", "M10 3v8L5 7z", "M4 3v8l5-4z", "M9 3v8M3 3v8l5-4z"].map((d) => (
      <button key={d} aria-label="布局导航" className="w-[14px] border-r border-[#aaa8ab]">
        <svg width="13" height="15" viewBox="0 0 13 14">
          <path d={d} fill="#6e6c70" stroke="#6e6c70" />
        </svg>
      </button>
    ))}
    <button className="w-[46px] text-white bg-[#212830] [clip-path:polygon(0_0,100%_0,88%_100%,12%_100%)]">模型</button>
    {["布局1", "布局2"].map((tab) => (
      <button key={tab} className="w-[47px] pl-1 flex items-center justify-between">
        {tab}
        <svg width="7" height="15" viewBox="0 0 7 15">
          <path d="M6.5 1l-6 14" stroke="#333" />
        </svg>
      </button>
    ))}
    <div className="ml-auto w-[263px] flex items-center gap-2">
      <span className="w-[5px] h-3 border border-r-0 rounded-l-sm border-[#8b898d]" />
      <svg width="5" height="6" viewBox="0 0 5 6">
        <path d="M5 0v6L0 3z" fill="#222" />
      </svg>
    </div>
  </div>
);

const CommandLine = () => (
  <div className="flex h-[58px] shrink-0">
    <div className="w-[22px] shrink-0 flex flex-col items-center bg-[#5b595d]">
      <div className="mt-1 w-[18px] h-[6px] bg-[radial-gradient(#a9a7ab_1px,transparent_1px)] bg-size-[3px_3px]" />
      <button aria-label="关闭命令行" className="mt-2">
        <svg width="10" height="10" viewBox="0 0 10 10">
          <path d="M1 1l8 8M9 1L1 9" stroke="#fff" strokeWidth="2" />
        </svg>
      </button>
      <button aria-label="自定义" className="mt-[10px]">
        <svg width="14" height="14" viewBox="0 0 14 14">
          <path
            d="M4 0l1 3-2 2-3-1c0 3 2 4 5 4l5 5c1 1.500 4-1 3-3L8 5c0-3-1-5-4-5z"
            fill="#fff"
          />
        </svg>
      </button>
    </div>
    <div className="flex-1 min-w-0 flex flex-col">
      <div className="h-[34px] pl-[2px] pt-[2px] bg-[#c8c6c9] border-b border-[#8b898d] text-[12px] leading-[15px] text-[#1c1c1e] whitespace-pre font-['DejaVu_Sans_Mono','Noto_Sans_CJK_SC',monospace]">
        <p>命令: '_quickcalc</p>
        <p>命令: 指定对角点或 [栏选(F)/圈围(WP)/圈交(CP)]:</p>
      </div>
      <label className="flex-1 flex items-center pl-[5px] bg-white">
        <svg width="15" height="13" viewBox="0 0 15 13" fill="none">
          <path d="M.5.5h14v12H.5z" fill="#f0f0f3" stroke="#a5a3a8" />
          <path d="M3 3.5l3 3-3 3M7 9.5h4" stroke="#444" />
        </svg>
        <SmallCaret className="ml-1 text-[#85838a]" />
        <input
          aria-label="命令"
          placeholder="键入命令"
          className="ml-2 flex-1 min-w-0 text-[12px] italic placeholder:text-[#a09ea3] outline-none"
        />
      </label>
    </div>
  </div>
);

const ScreenMenu = () => (
  <aside className="w-[76px] shrink-0 ml-2 mt-[2px] flex flex-col overflow-hidden text-[12px] text-black">
    <div className="shrink-0 bg-[#a5a3a6] rounded-t-sm">
      <div className="h-[23px] flex items-center gap-[6px] pl-[3px]">
        <div className="w-[5px] h-3 bg-[radial-gradient(#333_1px,transparent_1px)] bg-size-[3px_3px]" />
        T2...
      </div>
    </div>
    <ul className="flex-1 min-h-0 pt-[6px] bg-[#f1eff2] rounded-t-sm">
      {screenMenu.map((item) => (
        <li
          key={item}
          className={
            item === "门　　窗"
              ? "h-[18px] ml-[3px] pr-px border-t border-t-white border-b border-b-[#8b898d]"
              : "h-[18px] ml-[3px]"
          }
        >
          <button className="w-full h-full flex items-center pl-[5px] whitespace-nowrap leading-4">
            <svg width="6" height="10" viewBox="0 0 6 10" className="shrink-0 mr-[14px]">
              <path d="M0 0l5 5-5 5z" fill="#2f5c80" />
            </svg>
            {item}
          </button>
        </li>
      ))}
    </ul>
  </aside>
);

const StatusButton = ({ on, className = "w-[22px]", label, children }) => (
  <button
    aria-label={label}
    className={`${className} shrink-0 flex items-center justify-center border-r border-[#5d5b5f] bg-linear-to-b ${
      on ? "from-[#d9edf3] to-[#9ccbd8]" : "from-[#c4c2c5] to-[#a19fa3]"
    }`}
  >
    {children}
  </button>
);

const StatusBar = () => (
  <footer className="flex h-[23px] mb-px shrink-0 border-t border-[#3e3d40] bg-[#8d8b8f] text-[12px] text-black">
    <StatusButton className="w-[84px] gap-[7px]">
      <span className="text-[11px]">比例&nbsp; 1:100</span>
      <Caret />
    </StatusButton>
    <div className="w-[141px] shrink-0 flex items-center pl-[7px] text-[11px] whitespace-pre font-['Liberation_Sans',sans-serif]">
      69381,{"     "}16754,{"  "}0
    </div>
    {statusToggles.map(({ name, on }) => (
      <StatusButton key={name} on={on} label={name}>
        <Icon name={name} />
      </StatusButton>
    ))}
    <div className="w-3 shrink-0 bg-[#69676a] border-r border-[#5d5b5f]" />
    <StatusButton className="w-[29px]">模型</StatusButton>
    <StatusButton label="快速查看布局">
      <Icon name="layoutQv" />
    </StatusButton>
    <StatusButton label="快速查看图形">
      <Icon name="drawingQv" />
    </StatusButton>
    <div className="flex-1 min-w-0 bg-[#77757a]" />
    <StatusButton className="w-[54px] gap-[2px]">
      <Icon name="anno" className="size-4" />
      1:1
      <SmallCaret className="ml-1 text-black" />
    </StatusButton>
    <StatusButton label="注释可见性">
      <Icon name="annoOn" className="size-4" />
    </StatusButton>
    <StatusButton label="自动缩放">
      <Icon name="anno" className="size-4 opacity-50" />
    </StatusButton>
    <div className="w-2 shrink-0" />
    <StatusButton label="切换工作空间">
      <Icon name="gear" />
    </StatusButton>
    <StatusButton className="w-5" label="锁定">
      <Icon name="toolbarLock" className="size-4" />
    </StatusButton>
    <StatusButton className="w-5" label="隔离对象">
      <Icon name="bulb" className="size-4" />
    </StatusButton>
    <div className="w-[6px] shrink-0" />
    <StatusButton className="w-3" label="状态栏菜单">
      <SmallCaret className="text-black" />
    </StatusButton>
    <StatusButton className="w-[18px]" label="全屏显示">
      <Icon name="cleanScreen" className="size-[14px]" />
    </StatusButton>
    <svg width="18" height="22" viewBox="0 0 18 22" className="shrink-0">
      <path d="M14 9h2v2h-2zM14 13h2v2h-2zM14 17h2v2h-2zM10 13h2v2h-2zM10 17h2v2h-2zM6 17h2v2H6z" fill="#eceaed" />
    </svg>
  </footer>
);

const Watermark = () => (
  <div className="absolute right-[33px] bottom-[15px] w-[174px] h-[87px] flex items-center pl-[6px] bg-[#1f2d57] text-[#e3e3e5]">
    <svg width="43" height="55" viewBox="0 0 130 165" className="shrink-0">
      <path
        d="M6 37l18-14 6-6 14 4 2 18c-2 14-4 24 4 32 12 12 34 12 48 18 10 6 8 14 6 24 0 12 5 24 3 34l-2 10H88l5-6c1-14-8-24-18-34-12 4-26 2-36-2l-6 14v26H22l3-8-2-38C14 92 8 82 12 68c3-10 10-18 8-29-6 2-10 2-14-2z"
        fill="#e3e3e5"
      />
      <path
        d="M34 22l-12-12M36 20c10 4 20 0 32-4 16 0 34 6 46-7M44 20c-4-6-6-10-4-17M56 18c-4-6-5-10-2-15M68 16c-2-4-2-8 2-12M96 17l16-8"
        fill="none"
        stroke="#e3e3e5"
        strokeWidth="4"
        strokeLinecap="round"
      />
    </svg>
    <div className="ml-1 whitespace-nowrap">
      <p className="text-[27px] leading-[30px] font-medium font-['Noto_Sans_CJK_SC',sans-serif]">3D溜溜网</p>
      <p className="text-[21px] leading-[22px] font-light font-['Inter',sans-serif]">3D66.COM</p>
    </div>
  </div>
);

const App = () => {
  return (
    <div className="relative h-screen overflow-hidden flex flex-col bg-[#69676a] border-x border-b-2 border-[#3b3a3d] font-['Noto_Sans','Noto_Sans_CJK_SC',sans-serif]">
      <Header />
      <div className="flex-1 min-h-0 flex flex-col pl-1 pr-[3px]">
        <StandardToolbar />
        <LayerToolbar />
        <div className="flex-1 min-h-0 mt-[3px] flex">
          <div className="flex-1 min-w-0 flex flex-col">
            <div className="flex-1 min-h-0 flex mb-[5px]">
              <SideToolbar tools={drawTools} />
              <div className="ml-[5px] flex-1 min-w-0 flex flex-col border-2 border-[#c9c7ca] border-r-[#eeecef] border-b-0">
                <div className="flex-1 min-h-0 flex">
                  <Viewport />
                  <div className="w-4 shrink-0 relative flex flex-col items-center justify-between py-[7px] bg-[#f1eff2]">
                    <SmallCaret className="rotate-180" />
                    <SmallCaret />
                    <div className="absolute top-[68px] w-[14px] h-[15px] border border-[#77757a] bg-linear-to-r from-white to-[#d0ced2]" />
                  </div>
                </div>
                <LayoutTabs />
              </div>
              <div className="w-[6px] shrink-0" />
              <SideToolbar tools={modifyTools} />
            </div>
            <CommandLine />
          </div>
          <ScreenMenu />
        </div>
        <StatusBar />
      </div>
      <Watermark />
    </div>
  );
};

export default App;
